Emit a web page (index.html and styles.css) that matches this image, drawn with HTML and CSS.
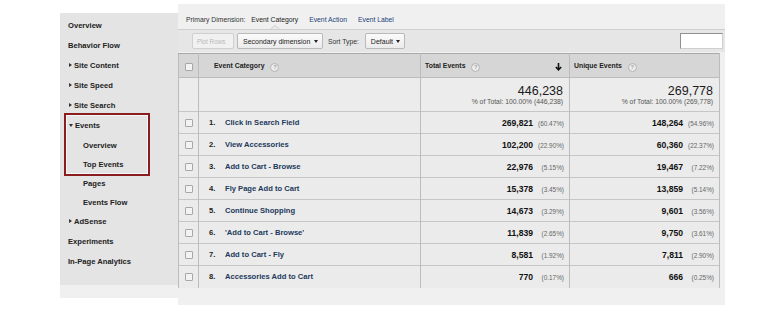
FILE: index.html
```html
<!DOCTYPE html>
<html lang="en">
<head>
    <meta charset="UTF-8">
    <meta name="viewport" content="width=device-width, initial-scale=1.0">
    <title>Top Events</title>
    <link rel="stylesheet" href="styles.css">
</head>
<body>
    <div class="page">
        <div class="side-col">
            <nav class="sidebar">
                <ul class="nav">
                    <li class="nav-item">Overview</li>
                    <li class="nav-item">Behavior Flow</li>
                    <li class="nav-item closed">Site Content</li>
                    <li class="nav-item closed">Site Speed</li>
                    <li class="nav-item closed">Site Search</li>
                    <li class="nav-item open">Events</li>
                    <li class="nav-item sub">Overview</li>
                    <li class="nav-item sub">Top Events</li>
                    <li class="nav-item sub">Pages</li>
                    <li class="nav-item sub">Events Flow</li>
                    <li class="nav-item closed">AdSense</li>
                    <li class="nav-item">Experiments</li>
                    <li class="nav-item">In-Page Analytics</li>
                </ul>
                <!-- annotation drawn over the menu -->
                <div class="highlight"></div>
            </nav>
        </div>

        <main class="main">
            <div class="dims">
                <span class="dims-label">Primary Dimension:</span>
                <span class="dim active">Event Category</span>
                <a class="dim">Event Action</a>
                <a class="dim">Event Label</a>
            </div>

            <div class="toolbar">
                <button class="btn" disabled>Plot Rows</button>
                <button class="btn select secondary">Secondary dimension</button>
                <span class="sort-label">Sort Type:</span>
                <button class="btn select sort">Default</button>
                <input class="search" type="text">
            </div>

            <table class="report">
                <colgroup>
                    <col class="col-check">
                    <col class="col-dim">
                    <col class="col-metric">
                    <col class="col-metric2">
                </colgroup>
                <thead>
                    <tr>
                        <th><span class="check"></span></th>
                        <th class="dim-head">Event Category <span class="help">?</span></th>
                        <th>
                            <div class="metric-head">
                                <span>Total Events <span class="help">?</span></span>
                                <svg class="sort-arrow" width="7" height="8" viewBox="0 0 7 8">
                                    <path d="M3.5 0V6.5M0.8 4L3.5 6.8L6.2 4" fill="none" stroke="#111" stroke-width="1.6"/>
                                </svg>
                            </div>
                        </th>
                        <th><div class="metric-head">
                            <span>Unique Events <span class="help">?</span></span>
                        </div></th>
                    </tr>
                </thead>
                <tbody id="rows">
                    <tr class="totals">
                        <td></td>
                        <td></td>
                        <td class="total">
                            <div class="big">446,238</div>
                            <div class="of-total">% of Total: 100.00% (446,238)</div>
                        </td>
                        <td class="total">
                            <div class="big">269,778</div>
                            <div class="of-total">% of Total: 100.00% (269,778)</div>
                        </td>
                    </tr>
                </tbody>
            </table>
        </main>
    </div>

    <script>
        document.addEventListener("DOMContentLoaded", function() {
            const rows = [
                ["Click in Search Field", "269,821", "60.47", "148,264", "54.96"],
                ["View Accessories", "102,200", "22.90", "60,360", "22.37"],
                ["Add to Cart - Browse", "22,976", "5.15", "19,467", "7.22"],
                ["Fly Page Add to Cart", "15,378", "3.45", "13,859", "5.14"],
                ["Continue Shopping", "14,673", "3.29", "9,601", "3.56"],
                ["'Add to Cart - Browse'", "11,839", "2.65", "9,750", "3.61"],
                ["Add to Cart - Fly", "8,581", "1.92", "7,811", "2.90"],
                ["Accessories Add to Cart", "770", "0.17", "666", "0.25"]
            ];
            const body = document.getElementById("rows");

            rows.forEach(function(r, i) {
                const tr = document.createElement("tr");
                tr.className = "data";
                tr.innerHTML = `
                    <td><span class="check"></span></td>
                    <td class="label"><span class="rank">${i + 1}.</span><a>${r[0]}</a></td>
                    <td class="num"><span class="value">${r[1]}</span><span class="pct">(${r[2]}%)</span></td>
                    <td class="num"><span class="value">${r[3]}</span><span class="pct">(${r[4]}%)</span></td>
                `;
                body.appendChild(tr);
            });
        });
    </script>
</body>
</html>
```

FILE: styles.css
```css
/* Reset */
body, ul, table {
    margin: 0;
    padding: 0;
}

body {
    font-family: "Liberation Sans", Arial, sans-serif;
    background-color: #fff;
    color: #222;
}

.page {
    display: flex;
    align-items: flex-start;
    width: 665px;
    margin-left: 60px;
    padding-top: 4px;
}

/* Left menu */
.side-col {
    width: 118px;
    margin-top: 9px;
    padding-bottom: 13px;
    background-color: #f0f0f0;
}

.sidebar {
    position: relative;
    height: 272px;
    background-color: #e4e4e4;
}

.nav {
    list-style: none;
    padding-top: 3px;
}

.nav-item {
    height: 20px;
    line-height: 20px;
    padding-left: 8px;
    font-size: 7.6px;
    font-weight: bold;
    color: #222;
    white-space: nowrap;
}

.nav-item.sub {
    height: 19px;
    line-height: 19px;
    padding-left: 23px;
}

.nav-item.closed::before,
.nav-item.open::before {
    content: "";
    display: inline-block;
    margin-right: 2px;
    vertical-align: 1px;
}

.nav-item.closed::before {
    margin-left: 1px;
    border-left: 3px solid #333;
    border-top: 2.5px solid transparent;
    border-bottom: 2.5px solid transparent;
}

.nav-item.open::before {
    margin-left: 1px;
    border-top: 3px solid #333;
    border-left: 2.5px solid transparent;
    border-right: 2.5px solid transparent;
}

.highlight {
    position: absolute;
    left: 4px;
    top: 100px;
    width: 86px;
    height: 63px;
    box-sizing: border-box;
    border: 2px solid #8c1d1f;
    box-shadow: inset 0 0 0 1px #f4f8fa;
}

/* Main report */
.main {
    flex: 1;
    height: 301px;
    background-color: #f0f0f0;
}

.dims {
    display: flex;
    height: 25px;
    box-sizing: border-box;
    padding: 11px 0 4px 8px;
    line-height: 10px;
    font-size: 6.8px;
}

.dims-label {
    margin-right: 6px;
    color: #333;
}

.dim {
    margin-right: 11px;
    color: #1b3f78;
}

.dim.active {
    position: relative;
    color: #222;
}

.dim.active::before,
.dim.active::after {
    content: "";
    position: absolute;
    left: 50%;
    width: 0;
    height: 0;
}

.dim.active::before {
    bottom: -4px;
    margin-left: -5px;
    border-left: 5px solid transparent;
    border-right: 5px solid transparent;
    border-bottom: 4px solid #c9c9c9;
}

.dim.active::after {
    bottom: -4px;
    margin-left: -4px;
    border-left: 4px solid transparent;
    border-right: 4px solid transparent;
    border-bottom: 3px solid #ececec;
}

.toolbar {
    display: flex;
    align-items: center;
    height: 22px;
    padding-left: 14px;
    border-top: 1px solid #cfcfcf;
    background-color: #e6e6e6;
    font-size: 6.8px;
}

.btn {
    position: relative;
    height: 16px;
    margin: 0 3px 0 0;
    padding: 0 5px;
    border: 1px solid #b9b9b9;
    border-radius: 2px;
    background: linear-gradient(#fbfbfb, #ebebeb);
    font-family: inherit;
    font-size: 7px;
    color: #222;
    text-align: left;
}

.btn[disabled] {
    width: 42px;
    padding: 0 4px;
    background: #f1f1f1;
    border-color: #d0d0d0;
    color: #b8b8b8;
    font-size: 6.3px;
}

.btn.select::after {
    content: "";
    position: absolute;
    right: 4px;
    top: 6px;
    border-top: 3px solid #222;
    border-left: 2.5px solid transparent;
    border-right: 2.5px solid transparent;
}

.btn.secondary {
    width: 86px;
}

.btn.sort {
    width: 40px;
}

.sort-label {
    margin: 0 6px 0 2px;
    color: #333;
}

.search {
    width: 43px;
    height: 16px;
    box-sizing: border-box;
    margin-left: auto;
    margin-right: 2px;
    border: 1px solid #8f8f8f;
    border-right-color: #cfcfcf;
    border-bottom-color: #cfcfcf;
    background-color: #fff;
}

/* Table */
.report {
    width: 541px;
    margin-top: 1px;
    table-layout: fixed;
    border-collapse: collapse;
    font-size: 7px;
}

.col-check { width: 20px; }
.col-dim { width: 222px; }
.col-metric { width: 149px; }
.col-metric2 { width: 150px; }

.report th,
.report td {
    padding: 0;
    border-left: 1px solid #bcbcbc;
    border-right: 1px solid #bcbcbc;
    box-sizing: border-box;
}

.report th {
    height: 24px;
    padding-top: 2px;
    border-top: 1px solid #a9a9a9;
    border-bottom: 1px solid #bdbdbd;
    background-color: #d6d6d6;
    font-size: 6.9px;
    font-weight: bold;
    text-align: left;
    color: #222;
}

.report th.dim-head {
    padding-left: 15px;
}

.metric-head {
    display: flex;
    justify-content: space-between;
    align-items: center;
    padding: 0 7px 0 4px;
}

.sort-arrow {
    display: block;
}

.help {
    display: inline-block;
    width: 7px;
    height: 7px;
    margin-left: 4px;
    border: 1px solid #b3b3b3;
    border-radius: 50%;
    background-color: #ececec;
    color: #999;
    font-size: 5px;
    line-height: 7px;
    text-align: center;
    vertical-align: -1px;
}

.check {
    display: block;
    width: 8px;
    height: 8px;
    margin: 0 auto;
    box-sizing: border-box;
    border: 1px solid #a7a7a7;
    border-radius: 1px;
    background-color: #f3f3f3;
}

.totals td {
    height: 34px;
    background-color: #ececec;
    vertical-align: top;
}

.total {
    padding: 6px 6px 0 0 !important;
    text-align: right;
}

.big {
    font-size: 12.5px;
    line-height: 14px;
    color: #1a1a1a;
}

.of-total {
    font-size: 6.8px;
    line-height: 8px;
    color: #555;
}

.data td {
    height: 22px;
    border-top: 1px solid #c6c6c6;
    background-color: #ebebeb;
}

.label {
    padding-left: 10px !important;
    font-size: 7.6px;
    font-weight: bold;
    white-space: nowrap;
}

.rank {
    display: inline-block;
    width: 16px;
    color: #222;
}

.label a {
    color: #1c3a5c;
}

.num {
    padding-right: 5px !important;
    text-align: right;
    white-space: nowrap;
}

.value {
    font-size: 8.6px;
    font-weight: bold;
    color: #111;
}

.pct {
    display: inline-block;
    width: 31px;
    font-size: 6.4px;
    color: #666;
    text-align: right;
}
```
